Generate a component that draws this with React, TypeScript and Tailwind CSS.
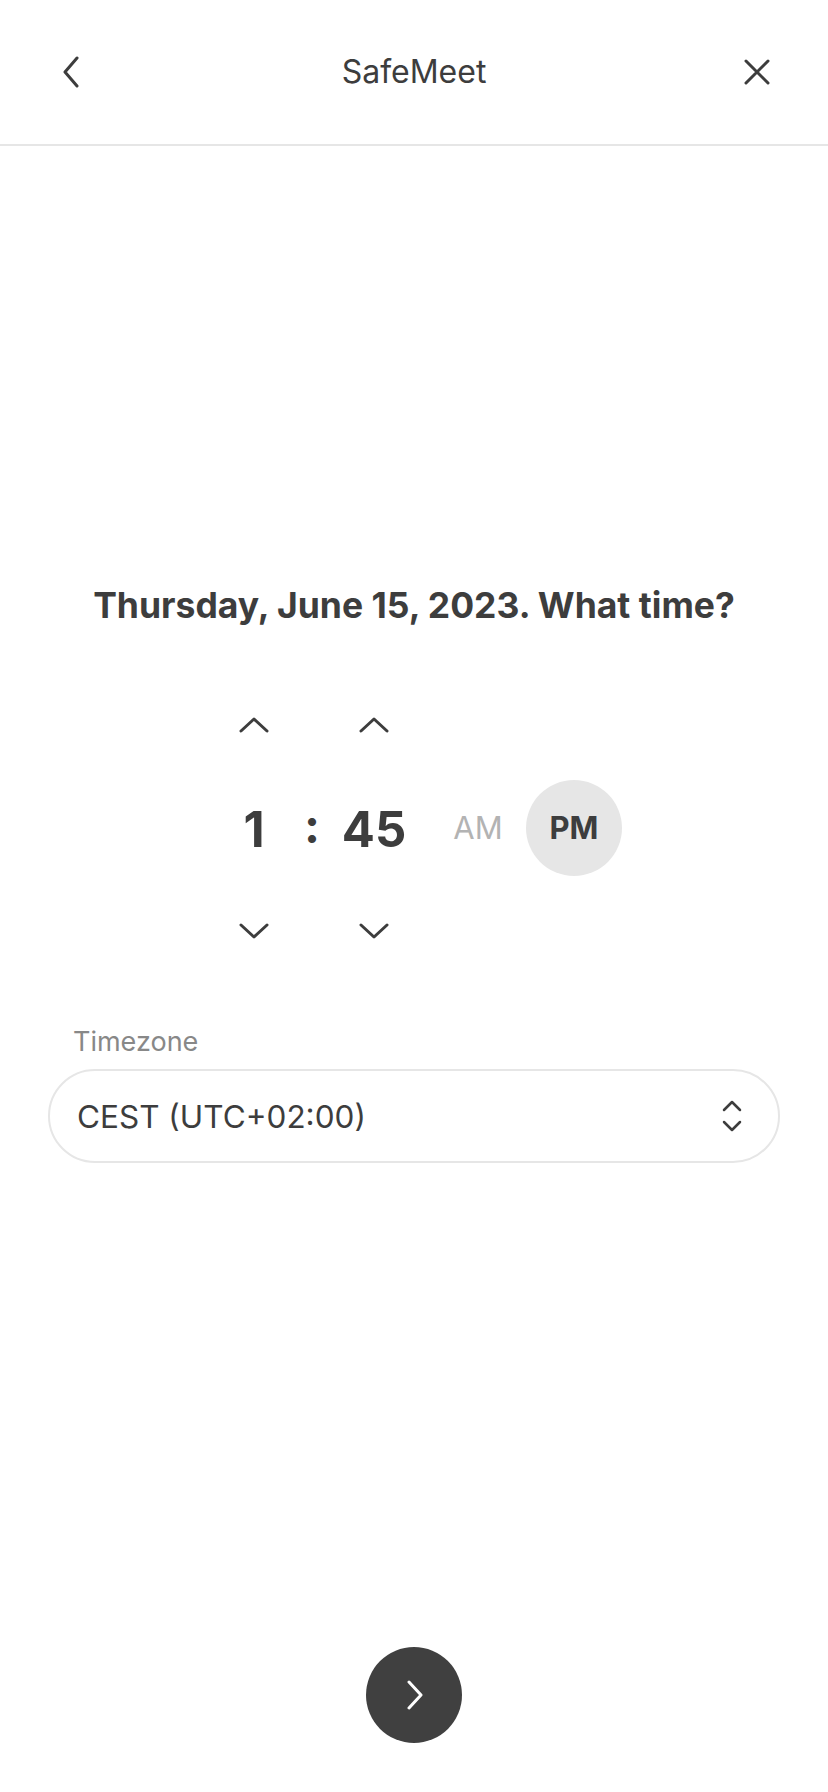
import React from 'react';

const ink = 'text-[#3d3d3d]';

function Chevron({ dir, className = '' }: { dir: 'up' | 'down'; className?: string }) {
  return (
    <svg width="30" height="16" viewBox="0 0 30 16" fill="none" className={className}>
      <path
        d={dir === 'up' ? 'M2 14 L15 2 L28 14' : 'M2 2 L15 14 L28 2'}
        stroke="#3d3d3d"
        strokeWidth="3"
        strokeLinecap="round"
        strokeLinejoin="round"
      />
    </svg>
  );
}

function Stepper({ value, width }: { value: string; width: string }) {
  return (
    <div className={`flex flex-col items-center ${width}`}>
      <button className="flex h-[48px] w-full items-center justify-center">
        <Chevron dir="up" />
      </button>
      <div className={`mt-[52px] text-[49px] font-bold leading-[58px] ${ink}`}>{value}</div>
      <button className="mt-[48px] flex h-[48px] w-full items-center justify-center">
        <Chevron dir="down" />
      </button>
    </div>
  );
}

export default function App() {
  return (
    <div
      className="flex min-h-[1792px] w-[828px] flex-col bg-white"
      style={{ fontFamily: 'Inter, Roboto, "Noto Sans", sans-serif' }}
    >
      <header className="flex h-[146px] shrink-0 items-center justify-between border-b-2 border-[#e6e6e6] px-[47px]">
        <button className="flex h-[48px] w-[48px] items-center justify-center">
          <svg width="18" height="32" viewBox="0 0 18 32" fill="none">
            <path d="M15 2 L3 16 L15 30" stroke="#3d3d3d" strokeWidth="3" strokeLinecap="round" strokeLinejoin="round" />
          </svg>
        </button>
        <h1 className={`text-[32px] font-normal leading-[40px] ${ink}`}>SafeMeet</h1>
        <button className="flex h-[48px] w-[48px] items-center justify-center">
          <svg width="26" height="26" viewBox="0 0 26 26" fill="none">
            <path d="M2 2 L24 24 M24 2 L2 24" stroke="#3d3d3d" strokeWidth="3" strokeLinecap="round" />
          </svg>
        </button>
      </header>

      <h2 className={`mt-[440px] text-center text-[35.5px] font-bold leading-[40px] ${ink}`}>
        Thursday, June 15, 2023. What time?
      </h2>

      <div className="mt-[75px] flex items-center pl-[214px]">
        <Stepper value="1" width="w-[80px]" />
        <div className={`w-[36px] pb-[4px] text-center text-[48px] font-bold leading-[58px] ${ink}`}>:</div>
        <Stepper value="45" width="w-[88px]" />
        <button className="ml-[22px] w-[76px] text-center text-[31px] leading-[40px] text-[#b3b3b3]">AM</button>
        <button
          className={`ml-[10px] flex h-[96px] w-[96px] items-center justify-center rounded-full bg-[#e6e6e6] text-[31px] font-bold ${ink}`}
        >
          PM
        </button>
      </div>

      <div className="mx-[48px] mt-[71px]">
        <div className="pl-[25px] text-[27px] leading-[32px] text-[#888888]">Timezone</div>
        <button className="mt-[11px] flex h-[94px] w-full items-center justify-between rounded-full border-2 border-[#e6e6e6] pl-[27px] pr-[36px]">
          <span className={`pt-[2px] text-[31.5px] leading-[40px] ${ink}`}>CEST (UTC+02:00)</span>
          <svg width="20" height="32" viewBox="0 0 20 32" fill="none">
            <path d="M2 10 L10 2 L18 10 M2 22 L10 30 L18 22" stroke="#3d3d3d" strokeWidth="2.5" strokeLinecap="round" strokeLinejoin="round" />
          </svg>
        </button>
      </div>

      <div className="mt-auto flex justify-center pb-[49px]">
        <button className="flex h-[96px] w-[96px] items-center justify-center rounded-full bg-[#404040]">
          <svg width="18" height="30" viewBox="0 0 18 30" fill="none" className="ml-[1px]">
            <path d="M3 2 L15 15 L3 28" stroke="#ffffff" strokeWidth="3" strokeLinecap="round" strokeLinejoin="round" />
          </svg>
        </button>
      </div>
    </div>
  );
}
